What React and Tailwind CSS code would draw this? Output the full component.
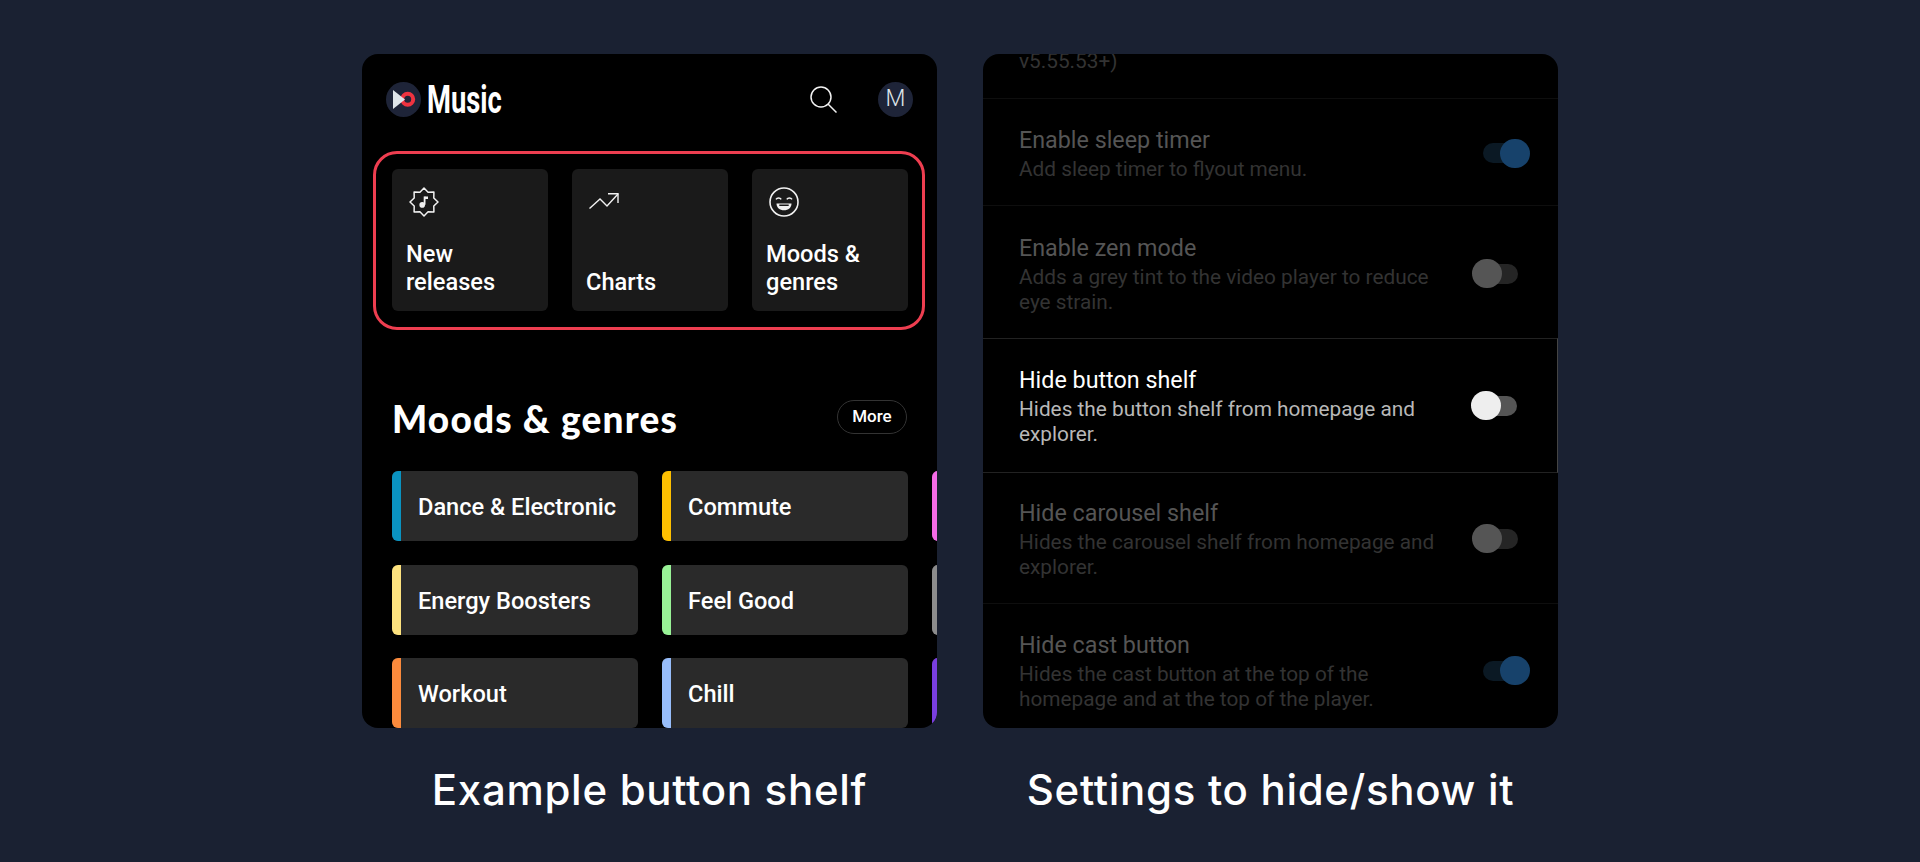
import React from 'react';

const starPoints = Array.from({ length: 16 }, (_, i) => {
    const r = i % 2 === 0 ? 14 : 10.6;
    const a = (i * Math.PI) / 8 - Math.PI / 2;
    return `${(15 + r * Math.cos(a)).toFixed(2)},${(15 + r * Math.sin(a)).toFixed(2)}`;
}).join(' ');

const NewReleasesIcon = () => (
    <svg width="30" height="30" viewBox="0 0 30 30" fill="none">
        <polygon points={starPoints} stroke="#f1f1f1" strokeWidth="1.5" strokeLinejoin="round" />
        <path d="M15.6 9.5v8.2" stroke="#f1f1f1" strokeWidth="1.8" />
        <path d="M15.6 9.5h3.4v2.4h-3.4z" fill="#f1f1f1" />
        <circle cx="13.2" cy="17.9" r="2.8" fill="#f1f1f1" />
    </svg>
);

const ChartsIcon = () => (
    <svg width="30" height="16" viewBox="0 0 30 16" fill="none" stroke="#f1f1f1" strokeWidth="1.4">
        <polyline points="0.5,15.5 11,6 18,13 29,1" />
        <polyline points="19,0.8 29,0.8 29,10" />
    </svg>
);

const MoodsIcon = () => (
    <svg width="30" height="30" viewBox="0 0 30 30" fill="none">
        <circle cx="15" cy="15" r="14" stroke="#f1f1f1" strokeWidth="1.6" />
        <path d="M7 12.4c1.200-1.800 4-1.800 5.200 0M17.800 12.400c1.200-1.800 4-1.800 5.200 0" stroke="#f1f1f1" strokeWidth="1.600" />
        <path d="M7.500 16.500h15c0 4-3.200 6.800-7.500 6.800s-7.500-2.800-7.500-6.800z" fill="#f1f1f1" />
        <path d="M10.300 18.200h9.400" stroke="#1a1a1a" strokeWidth="1.500" />
    </svg>
);

const tiles = [
    { icon: <NewReleasesIcon />, label: ['New', 'releases'], iconBox: 'pl-[3px]' },
    { icon: <ChartsIcon />, label: ['Charts'], iconBox: 'pl-[3px] pt-[6px]' },
    { icon: <MoodsIcon />, label: ['Moods &', 'genres'], iconBox: 'pl-[3px]' },
];

const chips = [
    { text: 'Dance & Electronic', bar: 'bg-[#0a93c1]' },
    { text: 'Commute', bar: 'bg-[#fdbf00]' },
    { text: '', bar: 'bg-[#f56be6]' },
    { text: 'Energy Boosters', bar: 'bg-[#fde27e]' },
    { text: 'Feel Good', bar: 'bg-[#98f296]' },
    { text: '', bar: 'bg-[#8c8c8c]' },
    { text: 'Workout', bar: 'bg-[#fb8a3c]' },
    { text: 'Chill', bar: 'bg-[#97bdfa]' },
    { text: '', bar: 'bg-[#7a3ee0]' },
];

const Toggle = ({ on, active }) => {
    if (on) {
        return (
            <div className="-mt-[2px] flex w-[59px] shrink-0 items-center justify-end">
                <div className="h-5 w-[42px] -mr-[25px] rounded-full bg-[#0b1924]" />
                <div className="relative h-[29px] w-[30px] rounded-full bg-[#17426b]" />
            </div>
        );
    }
    return (
        <div className="-mt-[2px] flex w-[59px] shrink-0 items-center pl-px">
            <div className={`relative z-10 h-[29px] w-[30px] rounded-full ${active ? 'bg-[#eeeeee]' : 'bg-[#555555]'}`} />
            <div className={`h-5 w-[36px] -ml-[20px] rounded-full ${active ? 'bg-[#555555]' : 'bg-[#252525]'}`} />
        </div>
    );
};

const settings = [
    { title: 'Enable sleep timer', sub: 'Add sleep timer to flyout menu.', on: true, rowClass: 'h-[107px] pt-[27px] border-b border-[#0e0e0e]' },
    { title: 'Enable zen mode', sub: 'Adds a grey tint to the video player to reduce eye strain.', on: false, rowClass: 'h-[132px] pt-[28px]' },
    { title: 'Hide button shelf', sub: 'Hides the button shelf from homepage and explorer.', on: false, active: true, rowClass: 'h-[135px] pt-[27px] border-y border-r border-y-[#222222] border-r-[#444444]' },
    { title: 'Hide carousel shelf', sub: 'Hides the carousel shelf from homepage and explorer.', on: false, rowClass: 'h-[131px] pt-[26px] border-b border-[#0e0e0e]' },
    { title: 'Hide cast button', sub: 'Hides the cast button at the top of the homepage and at the top of the player.', on: true, rowClass: 'h-[124px] pt-[27px]' },
];

const App = () => {
    return (
        <div className="flex h-[862px] flex-col items-center bg-[#1a2132] pt-[54px] font-['Roboto',sans-serif]">
            <div className="flex gap-[46px]">
                {/* music app */}
                <div className="flex flex-col items-center gap-[33px]">
                    <div className="h-[674px] w-[575px] overflow-hidden rounded-2xl bg-black">
                        <div className="flex h-[97px] items-center pl-6 pr-6 pt-[28px] pb-[34px]">
                            <svg width="35" height="35" viewBox="0 0 35 35">
                                <circle cx="17.500" cy="17.500" r="17.500" fill="#1e2438" />
                                <circle cx="21.700" cy="17.300" r="5.500" fill="none" stroke="#ef3340" strokeWidth="4" />
                                <polygon points="7,8 7,27 19,17.500" fill="#dfe5ea" />
                            </svg>
                            <span className="ml-[6px] inline-block origin-left scale-x-[0.72] text-[38px] leading-none font-bold text-white">Music</span>
                            <svg className="ml-auto" width="27" height="27" viewBox="0 0 27 27" fill="none" stroke="#f1f1f1" strokeWidth="1.500">
                                <circle cx="11" cy="11" r="10" />
                                <path d="M18 18l8.500 8.500" />
                            </svg>
                            <div className="ml-[41px] flex size-[35px] items-center justify-center rounded-full bg-[#1e2438] text-[23px] font-light text-[#dfe5ea]">M</div>
                        </div>
                        <div className="ml-[11px] h-[179px] w-[552px] rounded-3xl border-[3px] border-[#ee3e50] pt-[15px] pl-4">
                            <div className="flex gap-6">
                                {tiles.map((tile) => (
                                    <div key={tile.label[0]} className="flex h-[142px] w-[156px] flex-col justify-between rounded-md bg-[#1a1a1a] pt-[18px] pr-2 pb-[15px] pl-[14px]">
                                        <div className={tile.iconBox}>{tile.icon}</div>
                                        <div className="text-[23.6px] leading-[28px] font-medium text-white">
                                            {tile.label.map((line) => <div key={line}>{line}</div>)}
                                        </div>
                                    </div>
                                ))}
                            </div>
                        </div>
                        <div className="mt-[70px] flex h-[34px] items-center justify-between px-[30px]">
                            <h2 className="pt-[3px] font-['Lato',sans-serif] text-[37px] leading-none font-black tracking-[1.2px] text-white">Moods &amp; genres</h2>
                            <div className="flex h-[34px] w-[70px] items-center justify-center rounded-full border border-[#333333] text-[17px] font-medium text-white">More</div>
                        </div>
                        <div className="mt-[37px] grid w-[588px] grid-cols-[246px_246px_246px] gap-x-6 gap-y-[23.5px] pl-[30px]">
                            {chips.map((chip, i) => (
                                <div key={i} className="flex h-[70px] overflow-hidden rounded-md bg-[#2a2a2a]">
                                    <div className={`w-[9px] shrink-0 ${chip.bar}`} />
                                    <div className="flex items-center pt-1 pl-[17px] text-[23.6px] font-medium whitespace-nowrap text-white">{chip.text}</div>
                                </div>
                            ))}
                        </div>
                    </div>
                    <p className="font-['Inter',sans-serif] text-[42px] leading-[58px] font-medium tracking-[0.7px] text-white">Example button shelf</p>
                </div>

                {/* settings */}
                <div className="flex flex-col items-center gap-[33px]">
                    <div className="h-[674px] w-[575px] overflow-hidden rounded-2xl bg-black">
                        <div className="-mt-[5px] h-[50px] border-b border-[#0e0e0e] pl-9 text-[20.8px] leading-[25px] text-[#333333]">v5.55.53+)</div>
                        {settings.map((row) => (
                            <div key={row.title} className={`pr-7 pl-9 ${row.rowClass}`}>
                                <div className="flex items-center justify-between">
                                    <div className="w-[420px]">
                                        <div className={`text-[23.3px] leading-7 ${row.active ? 'text-white' : 'text-[#555555]'}`}>{row.title}</div>
                                        <div className={`mt-[3px] text-[20.8px] leading-[25px] ${row.active ? 'text-[#b8b8b8]' : 'text-[#333333]'}`}>{row.sub}</div>
                                    </div>
                                    <Toggle on={row.on} active={row.active} />
                                </div>
                            </div>
                        ))}
                    </div>
                    <p className="font-['Inter',sans-serif] text-[42px] leading-[58px] font-medium tracking-[0.7px] text-white">Settings to hide/show it</p>
                </div>
            </div>
        </div>
    );
};

export default App;
